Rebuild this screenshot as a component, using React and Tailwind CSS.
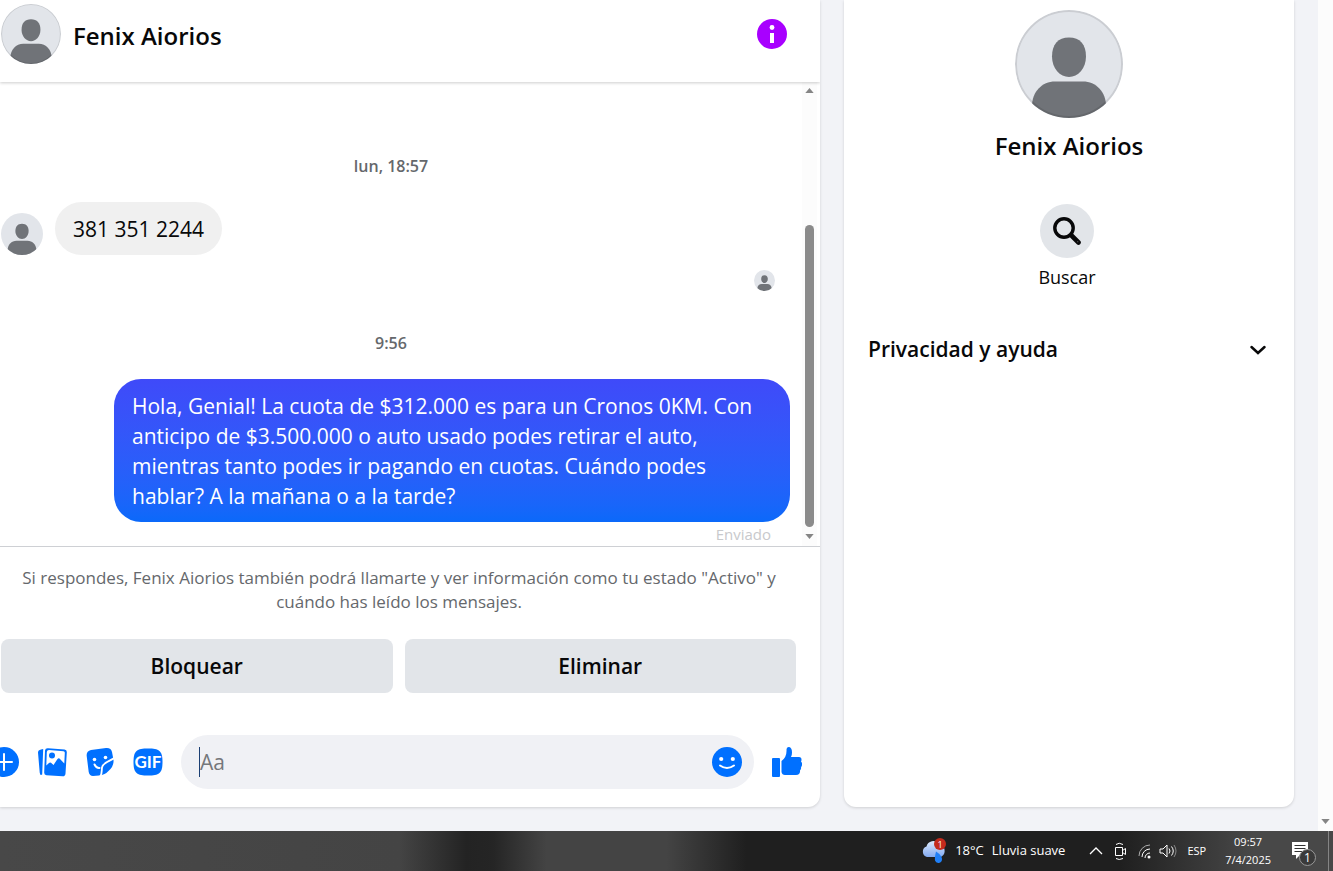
import React from "react";

const Avatar = ({ className, ring }) => (
  <svg viewBox="0 0 108 108" className={className} role="img" aria-label="Fenix Aiorios">
    <clipPath id={ring ? "ringed" : "plain"}>
      <circle cx="54" cy="54" r="54" />
    </clipPath>
    <g clipPath={ring ? "url(#ringed)" : "url(#plain)"}>
      <rect width="108" height="108" fill="#e2e5ea" />
      <path
        d="M54 27.500c11 0 17 7 17 19 0 12-8 20.500-17 20.500s-17-8.500-17-20.500c0-12 6-19 17-19z"
        fill="#707378"
      />
      <path d="M17 96c0-14 10-24.500 23-24.500h28c13 0 23 10.500 23 24.500v12H17z" fill="#707378" />
      {ring && (
        <circle cx="54" cy="54" r="53" fill="none" stroke="#000" strokeOpacity="0.1" strokeWidth="2" />
      )}
    </g>
  </svg>
);

const Arrow = ({ down }) => (
  <svg viewBox="0 0 10 6" className="h-[5px] w-[9px]" aria-hidden="true">
    <path d={down ? "M0 0h10L5 6z" : "M0 6h10L5 0z"} fill="#858585" />
  </svg>
);

const InfoIcon = () => (
  <svg viewBox="0 0 30 30" className="size-[30px]">
    <circle cx="15" cy="15" r="15" fill="#a800ff" />
    <circle cx="15" cy="8.500" r="2.400" fill="#fff" />
    <path d="M13 14h4v10h-4z" fill="#fff" />
  </svg>
);

const PlusIcon = () => (
  <svg viewBox="0 0 30 30" className="size-[30px]">
    <circle cx="15" cy="15" r="15" fill="#0070ff" />
    <path d="M15 7v16M7 15h16" stroke="#fff" strokeWidth="2" strokeLinecap="round" />
  </svg>
);

const PhotoIcon = () => (
  <svg viewBox="0 0 30 30" className="size-[30px]">
    <path d="M4 2.500 6.200 2 5.200 27.500 4 28Q3 28 2.700 25.500L1 5.500Q1 3 4 2.500z" fill="#0070ff" />
    <path
      d="M11 1.200 27.500 2.500Q30 2.700 29.800 5.500L28.500 26.500Q28.300 29.500 25.500 29.300L9.500 28.200Q7 28 7.200 25.500L8 3.500Q8.300 1 11 1.200z"
      fill="#0070ff"
    />
    <path
      d="M12 3 26.500 4.200Q28 4.400 27.800 6L27.300 16.500 22.500 11.500Q21.500 10.800 20.500 12L16.500 18 14 15.800Q13 15 12 16L9.300 18.500 9.800 5Q10 3 12 3z"
      fill="#fff"
    />
    <circle cx="15" cy="8.500" r="3" fill="#0070ff" />
  </svg>
);

const StickerIcon = () => (
  <svg viewBox="0 0 30 30" className="size-[30px]">
    <path
      d="M6 3 21 1Q26 .500 27 5L28.500 13Q29 19 24 23.500 20 28 14 28.500L8 29Q4.500 29 3.700 25L1.700 9Q1.200 4 6 3z"
      fill="#0070ff"
    />
    <circle cx="9.500" cy="12.500" r="1.800" fill="#fff" />
    <circle cx="20.500" cy="10.500" r="1.800" fill="#fff" />
    <path d="M9.500 17.500q2 4 5 3.500" fill="none" stroke="#fff" strokeWidth="2" strokeLinecap="round" />
    <path d="M30 10.500C26 14 18 15 17 20.500 16.500 23.500 17.500 26 15 30" fill="none" stroke="#fff" strokeWidth="1.800" />
  </svg>
);

const GifIcon = () => (
  <svg viewBox="0 0 30 28" className="h-[28px] w-[30px]">
    <path
      d="M15 .500C26 .500 29.500 2.500 29.500 14S26 27.500 15 27.500 .500 25.500 .500 14 4 .500 15 .500z"
      fill="#0070ff"
    />
    <text
      x="15"
      y="20"
      textAnchor="middle"
      fill="#fff"
      fontSize="17"
      fontWeight="700"
      fontFamily="Lato, sans-serif"
    >
      GIF
    </text>
  </svg>
);

const SmileIcon = () => (
  <svg viewBox="0 0 30 30" className="size-[30px]">
    <circle cx="15" cy="15" r="15" fill="#0070ff" />
    <circle cx="9.200" cy="12" r="2.100" fill="#fff" />
    <circle cx="20.800" cy="12" r="2.100" fill="#fff" />
    <path d="M8 18.500q7 5 14 0" fill="none" stroke="#fff" strokeWidth="2" strokeLinecap="round" />
  </svg>
);

const LikeIcon = () => (
  <svg viewBox="0 0 30 30" className="size-[30px]">
    <rect y="11" width="8" height="19" rx="1" fill="#0070ff" />
    <path
      d="M9.500 14Q15 10 14.500 2.500 14.500 0 16.500 0 20 0 20 5.500 20 8 19 10L27 10Q29.500 10 29.500 12.500 29.500 14 29 14.500 30.500 16 30 18 30 19.500 29 20 29.500 22 28 23.500 28.500 28 24 28L13 28Q10 28 9.500 25z"
      fill="#0070ff"
    />
  </svg>
);

const SearchIcon = () => (
  <svg viewBox="0 0 28 28" className="size-[28px]" fill="none" stroke="#080809" strokeLinecap="round">
    <circle cx="11" cy="11" r="9.200" strokeWidth="3.400" />
    <path d="m18.500 18.500 7 7" strokeWidth="4.600" />
    <circle cx="24.800" cy="24.800" r=".500" fill="#999" stroke="none" />
  </svg>
);

const WeatherIcon = () => (
  <svg viewBox="0 0 26 26" className="size-[26px]">
    <defs>
      <linearGradient id="cloud" x1="0" y1="0" x2="0" y2="1">
        <stop offset="0" stopColor="#dce9fc" />
        <stop offset="1" stopColor="#83aaf0" />
      </linearGradient>
    </defs>
    <path d="M6 19a5.500 5.500 0 0 1-.500-10.500A7 7 0 0 1 18 6a7 7 0 0 1 2 13z" fill="url(#cloud)" />
    <path d="M15 13.500q6 4 6 8a3.600 3.600 0 0 1-7 1q-.500-3 1-9z" fill="#2080f8" />
    <circle cx="19" cy="6" r="6" fill="#c42b1c" />
    <text x="19" y="9.500" textAnchor="middle" fill="#fff" fontSize="9" fontFamily="'Open Sans', sans-serif">
      1
    </text>
  </svg>
);

const Header = () => (
  <header className="z-10 flex h-[82px] items-start justify-between bg-white pt-1 pr-[33px] pl-px shadow-[0_1px_3px_rgba(0,0,0,0.2)]">
    <div className="flex items-center gap-3">
      <Avatar ring className="size-[60px]" />
      <h1 className="pt-1 text-[24px] leading-8 font-semibold">Fenix Aiorios</h1>
    </div>
    <button type="button" aria-label="Información" className="mt-[15px]">
      <InfoIcon />
    </button>
  </header>
);

const Messages = () => (
  <div className="flex flex-1 border-b border-[#ced0d4]">
    <div className="flex flex-1 flex-col pt-[72px] pr-3">
      <p className="pr-2 text-center text-[16px] leading-6 font-semibold text-[#65686c]">lun, 18:57</p>
      <div className="mt-6 flex items-end gap-3 pl-px">
        <Avatar className="size-[42px]" />
        <p className="rounded-full bg-[#f0f0f0] px-[18px] pt-3 pb-[11px] text-[21px] leading-[30px]">
          381 351 2244
        </p>
      </div>
      <div className="mt-[15px] flex justify-end pr-[15px]">
        <Avatar className="size-[21px]" />
      </div>
      <p className="mt-10 pr-2 text-center text-[16px] leading-6 font-semibold text-[#65686c]">9:56</p>
      <p className="mt-6 w-[676px] self-end rounded-[27px] bg-linear-to-b from-[#3f4af9] to-[#0a69fa] px-[18px] pt-3 pb-[11px] text-[21px] leading-[30px] text-white">
        Hola, Genial! La cuota de $312.000 es para un Cronos 0KM. Con anticipo de $3.500.000 o auto
        usado podes retirar el auto, mientras tanto podes ir pagando en cuotas. Cuándo podes hablar?
        A la mañana o a la tarde?
      </p>
      <p className="pt-[2px] pr-[19px] text-right text-[15px] leading-5 text-[#c8c9cc]">Enviado</p>
    </div>
    <div className="mr-[3px] flex w-[15px] flex-col items-center bg-[#fcfcfc] pt-[6px] pb-[7px]">
      <Arrow />
      <div className="mt-[132px] mb-[7px] w-[9px] flex-1 rounded-full bg-[#8b8b8b]" />
      <Arrow down />
    </div>
  </div>
);

const Composer = () => (
  <form className="mt-[42px] -ml-[11px] flex items-center pr-[18px] pb-[18px]">
    <div className="mr-[18px] flex items-center gap-[18px]">
      <button type="button" aria-label="Más acciones"><PlusIcon /></button>
      <button type="button" aria-label="Adjuntar foto"><PhotoIcon /></button>
      <button type="button" aria-label="Stickers"><StickerIcon /></button>
      <button type="button" aria-label="Elegir GIF"><GifIcon /></button>
    </div>
    <div className="flex h-[54px] flex-1 items-center rounded-full bg-[#f0f1f5] pr-3 pl-[18px]">
      <span className="h-[30px] w-px bg-[#1b3f73]" />
      <input
        aria-label="Mensaje"
        placeholder="Aa"
        className="min-w-0 flex-1 text-[21px] leading-8 outline-none placeholder:text-[#75777b]"
      />
      <button type="button" aria-label="Emoji"><SmileIcon /></button>
    </div>
    <button type="button" aria-label="Me gusta" className="ml-[18px]"><LikeIcon /></button>
  </form>
);

const Chat = () => (
  <section className="flex flex-1 flex-col overflow-hidden rounded-br-xl bg-white shadow-[0_1px_3px_rgba(0,0,0,0.15)]">
    <Header />
    <Messages />
    <p className="px-4 pt-[19px] pr-[38px] text-center text-[17px] leading-6 text-[#65686c]">
      Si respondes, Fenix Aiorios también podrá llamarte y ver información como tu estado "Activo" y
      cuándo has leído los mensajes.
    </p>
    <div className="mt-[25px] flex gap-3 pr-6 pl-px text-[21px] font-semibold">
      <button type="button" className="h-[54px] flex-1 rounded-lg bg-[#e2e5e9] pt-0.5">Bloquear</button>
      <button type="button" className="h-[54px] flex-1 rounded-lg bg-[#e2e5e9] pt-0.5">Eliminar</button>
    </div>
    <Composer />
  </section>
);

const Profile = () => (
  <aside className="flex w-[450px] flex-col items-center rounded-b-xl bg-white px-6 pt-[10px] shadow-[0_1px_3px_rgba(0,0,0,0.15)]">
    <Avatar ring className="size-[108px]" />
    <h2 className="mt-3 text-[24px] leading-8 font-semibold">Fenix Aiorios</h2>
    <button type="button" className="mt-[42px] mr-1 flex flex-col items-center gap-[7px] text-[18px] leading-6">
      <span className="flex size-[54px] items-center justify-center rounded-full bg-[#e2e5e9]">
        <SearchIcon />
      </span>
      Buscar
    </button>
    <button type="button" className="mt-11 flex w-full items-center justify-between text-[21px] leading-8 font-semibold">
      Privacidad y ayuda
      <svg viewBox="0 0 18 12" className="mr-[3px] h-3 w-[18px]" aria-hidden="true">
        <path d="m2.500 4 6.500 6 6.500-6" fill="none" stroke="#080809" strokeWidth="2.500" strokeLinecap="round" />
      </svg>
    </button>
  </aside>
);

const Taskbar = () => (
  <footer className="flex h-10 items-center justify-end bg-[linear-gradient(90deg,#484848_0%,#444_30%,#232323_35%,#252525_37%,#444_41%,#444_50%,#1f1f1f_56%,#1f1f1f_84%,#484848_94%,#484848_100%)] text-[13px] text-white">
    <button type="button" className="flex items-center">
      <WeatherIcon />
      <span className="ml-2">18°C</span>
      <span className="ml-2">Lluvia suave</span>
    </button>
    <svg viewBox="0 0 88 20" className="ml-6 h-5 w-[88px]" fill="none" stroke="#fff" aria-hidden="true">
      <path d="m1 13 6-6 6 6" strokeWidth="1.300" />
      <path d="M26.500 6.500h7v8h-7zM33.500 9.500l3-2v6l-3-2M27 3.500q3-2.500 7 0M27 17.500q3 2 7 0" />
      <path d="M50 15A11 11 0 0 1 61 4" stroke="#aaa" />
      <path d="M53 16a8 8 0 0 1 8-8M56 17a5 5 0 0 1 5-5" />
      <circle cx="60" cy="16" r="1.500" fill="#fff" stroke="none" />
      <path d="M71 8h3l4-4v12l-4-4h-3zM80 7.500q2 2.500 0 5M82.500 5.500q3.500 4.500 0 9" />
      <path d="M85 4q4 6 0 12" stroke="#888" />
    </svg>
    <span className="ml-[10px] text-[11px]">ESP</span>
    <div className="ml-[19px] text-center text-[11px] leading-[18px]">
      <p>09:57</p>
      <p>7/4/2025</p>
    </div>
    <button type="button" aria-label="Notificaciones" className="mt-1 ml-5">
      <svg viewBox="0 0 26 26" className="size-[26px]">
        <path d="M1 2h16v13H9l-4 4v-4H1z" fill="#fff" />
        <path d="M3.500 5.500h11M3.500 8.500h11M3.500 11.500h8" stroke="#333" />
        <circle cx="16.500" cy="17.500" r="8" fill="#3a3a3a" stroke="#999" />
        <text x="16.500" y="22" textAnchor="middle" fill="#fff" fontSize="12" fontFamily="'Open Sans', sans-serif">
          1
        </text>
      </svg>
    </button>
    <span className="mr-1 ml-[11px] h-10 w-px bg-[#858585]" />
  </footer>
);

export default function App() {
  return (
    <div className="flex min-h-screen flex-col bg-[#f2f3f7] font-['Open_Sans','Noto_Sans',sans-serif] text-[#080809]">
      <div className="flex flex-1">
        <main className="flex flex-1 gap-6 pr-6 pb-6">
          <Chat />
          <Profile />
        </main>
        <div className="flex w-[15px] flex-col items-center justify-end bg-[#fcfcfc] pb-[7px]">
          <Arrow down />
        </div>
      </div>
      <Taskbar />
    </div>
  );
}
